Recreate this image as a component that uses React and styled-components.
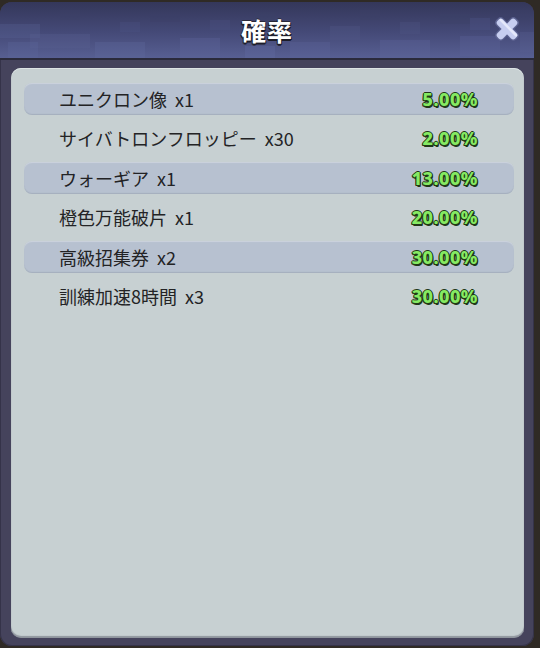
import React from 'react';
import styled, { createGlobalStyle } from 'styled-components';

const GlobalStyle = createGlobalStyle`
  html, body {
    margin: 0;
    padding: 0;
    background: #2f2a25;
  }
  #root {
    width: 540px;
    height: 648px;
    overflow: hidden;
  }
`;

const Modal = styled.div`
  width: 534px;
  height: 644px;
  margin-top: 2px;
  background: #45435c;
  border-radius: 12px;
  display: flex;
  flex-direction: column;
  overflow: hidden;
  box-shadow: inset 0 0 0 1px #353349;
`;

const Header = styled.div`
  position: relative;
  height: 56px;
  flex-shrink: 0;
  display: flex;
  align-items: center;
  justify-content: center;
  background: linear-gradient(180deg, #34375a 0%, #454a78 55%, #575f92 100%);
  border-bottom: 2px solid #2a2a3b;
  overflow: hidden;
`;

const Pattern = styled.svg`
  position: absolute;
  inset: 0;
  pointer-events: none;
`;

const Title = styled.h1`
  position: relative;
  margin: 0;
  font-family: 'Noto Sans CJK JP', 'Noto Sans', sans-serif;
  font-size: 25px;
  font-weight: 700;
  color: #ffffff;
  letter-spacing: 1px;
  text-shadow: 0 2px 0 #1c1c28, 1px 1px 0 #1c1c28, -1px 1px 0 #1c1c28, 0 -1px 0 #2a2a3a;
`;

const CloseButton = styled.button`
  position: absolute;
  right: 12px;
  top: 12px;
  width: 30px;
  height: 30px;
  padding: 0;
  border: none;
  background: transparent;
  cursor: pointer;
`;

const Body = styled.div`
  flex: 1;
  display: flex;
  padding: 8px 10px 8px 11px;
`;

const Panel = styled.div`
  flex: 1;
  background: #c7d0d2;
  border-radius: 10px;
  padding: 15px 10px 0 13px;
  display: flex;
  flex-direction: column;
  gap: 7.4px;
  box-shadow: inset 0 -2px 1px rgba(40, 40, 60, 0.35), inset 0 1px 0 #dde4e5;
`;

const Row = styled.div`
  height: 32px;
  display: flex;
  align-items: center;
  justify-content: space-between;
  padding: 0 36px 0 35px;
  border-radius: 8px;
  background: ${(p) => (p.$striped ? '#b7c1d0' : 'transparent')};
  box-shadow: ${(p) =>
    p.$striped ? 'inset 0 1px 1px rgba(255,255,255,0.3), inset 0 -1px 1px rgba(90,100,120,0.2)' : 'none'};
`;

const ItemName = styled.span`
  font-family: 'Noto Sans CJK JP', 'Noto Sans', sans-serif;
  font-size: 18px;
  color: #232325;
  white-space: pre;
`;

const Rate = styled.span`
  font-family: 'Noto Sans', 'DejaVu Sans', sans-serif;
  font-size: 18px;
  font-weight: 800;
  color: #86ea62;
  letter-spacing: 0.5px;
  text-shadow: 1px 0 0 #213818, -1px 0 0 #213818, 0 -1px 0 #213818, 0 1px 0 #213818,
    1px 1px 0 #213818, -1px 1px 0 #213818, 1px 2px 0 #213818;
`;

const items = [
  { name: 'ユニクロン像  x1', rate: '5.00%' },
  { name: 'サイバトロンフロッピー  x30', rate: '2.00%' },
  { name: 'ウォーギア  x1', rate: '13.00%' },
  { name: '橙色万能破片  x1', rate: '20.00%' },
  { name: '高級招集券  x2', rate: '30.00%' },
  { name: '訓練加速8時間  x3', rate: '30.00%' },
];

// pixel blocks for the header camo
const blocks = [
  [0, 22, 40, 14, '#5b6394'], [30, 32, 60, 14, '#5a6193'], [60, 8, 20, 10, '#3f4368'],
  [95, 40, 50, 16, '#6069a0'], [120, 20, 20, 10, '#4c5283'], [150, 10, 30, 10, '#3c4066'],
  [180, 36, 40, 20, '#5f68a0'], [210, 18, 20, 10, '#4d5384'], [255, 10, 20, 10, '#3d4166'],
  [290, 40, 40, 16, '#5d659c'], [330, 24, 30, 14, '#525989'], [360, 8, 20, 10, '#3e4268'],
  [380, 38, 50, 18, '#6068a0'], [400, 20, 20, 12, '#4f5586'], [440, 12, 30, 10, '#3d4167'],
  [460, 34, 40, 20, '#5c649b'], [470, 16, 20, 12, '#51578a'], [500, 8, 30, 10, '#3f4369'],
  [8, 40, 30, 16, '#5d669d'], [245, 44, 30, 12, '#646ca4'], [520, 30, 14, 20, '#585f93'],
];

const CloseIcon = () => (
  <svg width="30" height="30" viewBox="0 0 30 30">
    <g transform="translate(15 15) rotate(45)">
      <rect x="-14" y="-5" width="28" height="10" rx="4" fill="#5c6290" />
      <rect x="-5" y="-14" width="10" height="28" rx="4" fill="#5c6290" />
      <rect x="-12.5" y="-3.8" width="25" height="7.6" rx="3" fill="#c6cdf0" />
      <rect x="-3.8" y="-12.5" width="7.6" height="25" rx="3" fill="#c6cdf0" />
      <rect x="-12" y="-3.2" width="24" height="2.5" rx="1.2" fill="#e4e8fb" />
    </g>
  </svg>
);

const App = () => {
  return (
    <>
      <GlobalStyle />
      <Modal>
        <Header>
          <Pattern width="534" height="56" viewBox="0 0 534 56">
            {blocks.map(([x, y, w, h, c], i) => (
              <rect key={i} x={x} y={y} width={w} height={h} fill={c} opacity="0.3" />
            ))}
          </Pattern>
          <Title>確率</Title>
          <CloseButton aria-label="close">
            <CloseIcon />
          </CloseButton>
        </Header>
        <Body>
          <Panel>
            {items.map((item, i) => (
              <Row key={i} $striped={i % 2 === 0}>
                <ItemName>{item.name}</ItemName>
                <Rate>{item.rate}</Rate>
              </Row>
            ))}
          </Panel>
        </Body>
      </Modal>
    </>
  );
};

export default App;
